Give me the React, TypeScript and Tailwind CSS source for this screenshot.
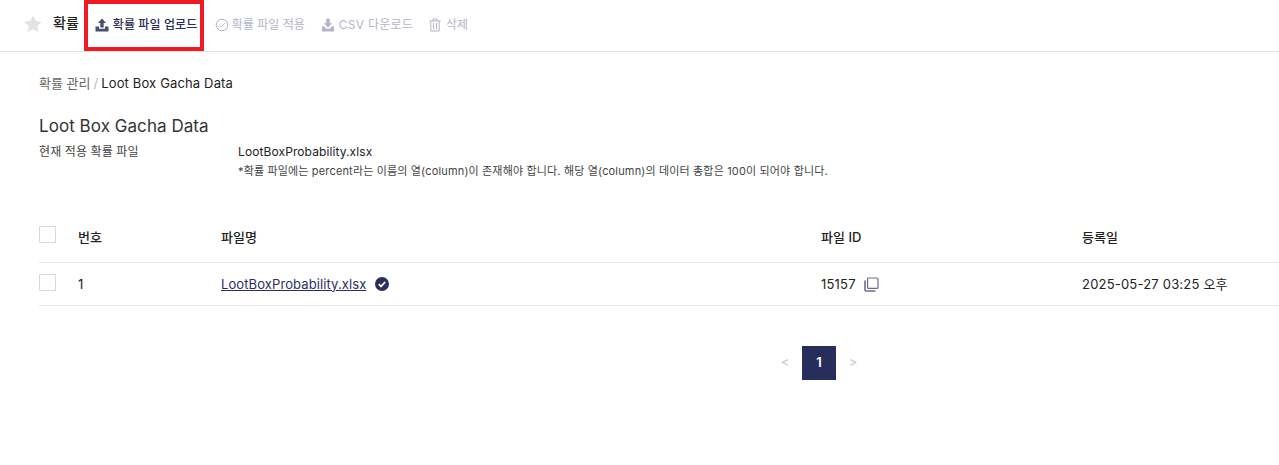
import React from "react";

const font = { fontFamily: '"Inter", "Noto Sans CJK KR", sans-serif' };

function Upload({ c }: { c: string }) {
  return (
    <svg width="14" height="14" viewBox="0 0 14 14" fill={c}>
      <path d="M7 0.5 L11 5 H8.7 V9.5 H5.3 V5 H3 Z" />
      <path d="M0.5 8.5 H4 V10.8 H10 V8.5 H13.5 V13.5 H0.5 Z" />
    </svg>
  );
}
function Download({ c }: { c: string }) {
  return (
    <svg width="14" height="14" viewBox="0 0 14 14" fill={c}>
      <path d="M5.3 0.5 H8.7 V5 H11 L7 9.8 L3 5 H5.3 Z" />
      <path d="M1 8.5 H3.6 L5 10.8 H9 L10.4 8.5 H13 V13.5 H1 Z" />
    </svg>
  );
}

const Check = () => <div className="w-[17px] h-[17px] border border-[#d9d9d9] bg-white" />;

export default function App() {
  return (
    <div style={font} className="w-[1279px] h-[465px] bg-white overflow-hidden text-[#222]">
      <header className="h-[52px] border-b border-[#e2e2e2] flex items-center pl-[23px] pb-[1px]">
        <svg width="20" height="20" viewBox="0 0 24 24" fill="#e3e3e3" className="mr-[10px] -mt-[2px]">
          <path d="M12 1.5l3.2 7 7.6.8-5.7 5.1 1.6 7.5L12 18l-6.7 3.9 1.6-7.5L1.2 9.3l7.6-.8z" />
        </svg>
        <span className="text-[14px] font-medium text-[#222] mr-[5px] -mt-[6px]">확률</span>
        <div className="w-[120px] h-[51px] border-[4px] border-[#ee1c25] flex items-center pl-[7px] gap-[4px]">
          <Upload c="#4b4f6e" />
          <span className="text-[12px] font-medium text-[#2b2f55] whitespace-nowrap tracking-[0.1px]">확률 파일 업로드</span>
        </div>
        <div className="flex items-center gap-[3px] ml-[11px] text-[12px] text-[#b3b5c6]">
          <svg width="14" height="14" viewBox="0 0 14 14" fill="none" stroke="#b3b5c6" strokeWidth="1">
            <circle cx="7" cy="7" r="5.8" />
            <path d="M4.4 7.2 L6.3 9 L9.7 5.3" />
          </svg>
          <span>확률 파일 적용</span>
        </div>
        <div className="flex items-center gap-[4px] ml-[16px] text-[12px] text-[#b3b5c6]">
          <Download c="#b3b5c6" />
          <span className="tracking-[0.25px]">CSV 다운로드</span>
        </div>
        <div className="flex items-center gap-[4px] ml-[15px] text-[12px] text-[#b3b5c6]">
          <svg width="14" height="14" viewBox="0 0 14 14" fill="none" stroke="#b3b5c6" strokeWidth="1">
            <path d="M1.5 3 H12.5 M5 3 V1 H9 V3 M2.8 3 V13 H11.2 V3 M5.5 5 V11 M8.5 5 V11" />
          </svg>
          <span>삭제</span>
        </div>
      </header>

      <main className="pl-[39px]">
        <div className="pt-[22px] text-[13px] leading-[18px] flex">
          <span className="text-[#666] whitespace-pre">확률 관리</span>
          <span className="text-[#bbb] ml-[3px] mr-[3px]">/</span>
          <span className="text-[#222] tracking-[0.15px]">Loot Box Gacha Data</span>
        </div>
        <h1 className="mt-[22px] text-[17px] leading-[24px] text-[#333] tracking-[0.05px]">Loot Box Gacha Data</h1>
        <div className="flex mt-[5px]">
          <div className="w-[199px] text-[12px] leading-[18px] text-[#444] tracking-[0.1px]">현재 적용 확률 파일</div>
          <div>
            <div className="text-[12px] leading-[18px] text-[#222] tracking-[0.1px]">LootBoxProbability.xlsx</div>
            <div className="text-[11px] leading-[18px] text-[#444] mt-[1px] whitespace-nowrap tracking-[0.16px]">
              *확률 파일에는 percent라는 이름의 열(column)이 존재해야 합니다. 해당 열(column)의 데이터 총합은 100이 되어야 합니다.
            </div>
          </div>
        </div>

        <div className="mt-[36px]">
          <div className="grid grid-cols-[39px_143px_600px_261px_1fr] h-[47px] items-center border-b border-[#e8e8e8] text-[13px] font-medium text-[#222] pb-[2px]">
            <div className="-mt-[8px]"><Check /></div>
            <div>번호</div>
            <div>파일명</div>
            <div>파일 ID</div>
            <div>등록일</div>
          </div>
          <div className="grid grid-cols-[39px_143px_600px_261px_1fr] h-[43px] items-center border-b border-[#e8e8e8] text-[13px] text-[#222] tracking-[0.1px]">
            <div className="-mt-[3px]"><Check /></div>
            <div className="pt-[1px]">1</div>
            <div className="flex items-center gap-[9px] pt-[1px]">
              <span className="underline text-[#2a2f5e]">LootBoxProbability.xlsx</span>
              <svg width="14" height="14" viewBox="0 0 14 14" className="-mt-[1px]">
                <circle cx="7" cy="7" r="7" fill="#2a2f5e" />
                <path d="M3.8 7.2 L6 9.4 L10.2 5" fill="none" stroke="#fff" strokeWidth="1.8" />
              </svg>
            </div>
            <div className="flex items-center gap-[8px] pt-[1px] tracking-[0.2px]">
              <span>15157</span>
              <svg width="15" height="15" viewBox="0 0 15 15" fill="none" stroke="#6c6f8c" strokeWidth="1.2" className="-mt-[1px]">
                <rect x="3.6" y="1" width="10.4" height="10.4" rx="1" />
                <path d="M1 3.5 V13 a1 1 0 0 0 1 1 H11.5" strokeWidth="1.6" />
              </svg>
            </div>
            <div className="pt-[1px] tracking-[0.2px]">2025-05-27 03:25 오후</div>
          </div>
        </div>

        <div className="flex justify-center items-center mt-[40px] ml-[-39px] pl-[359px]">
          <span className="w-[34px] text-center text-[13px] text-[#c4c4c4]">&lt;</span>
          <span className="w-[34px] h-[34px] flex items-center justify-center bg-[#282e5c] text-white text-[13px] font-semibold">1</span>
          <span className="w-[34px] text-center text-[13px] text-[#c4c4c4]">&gt;</span>
        </div>
      </main>
    </div>
  );
}
